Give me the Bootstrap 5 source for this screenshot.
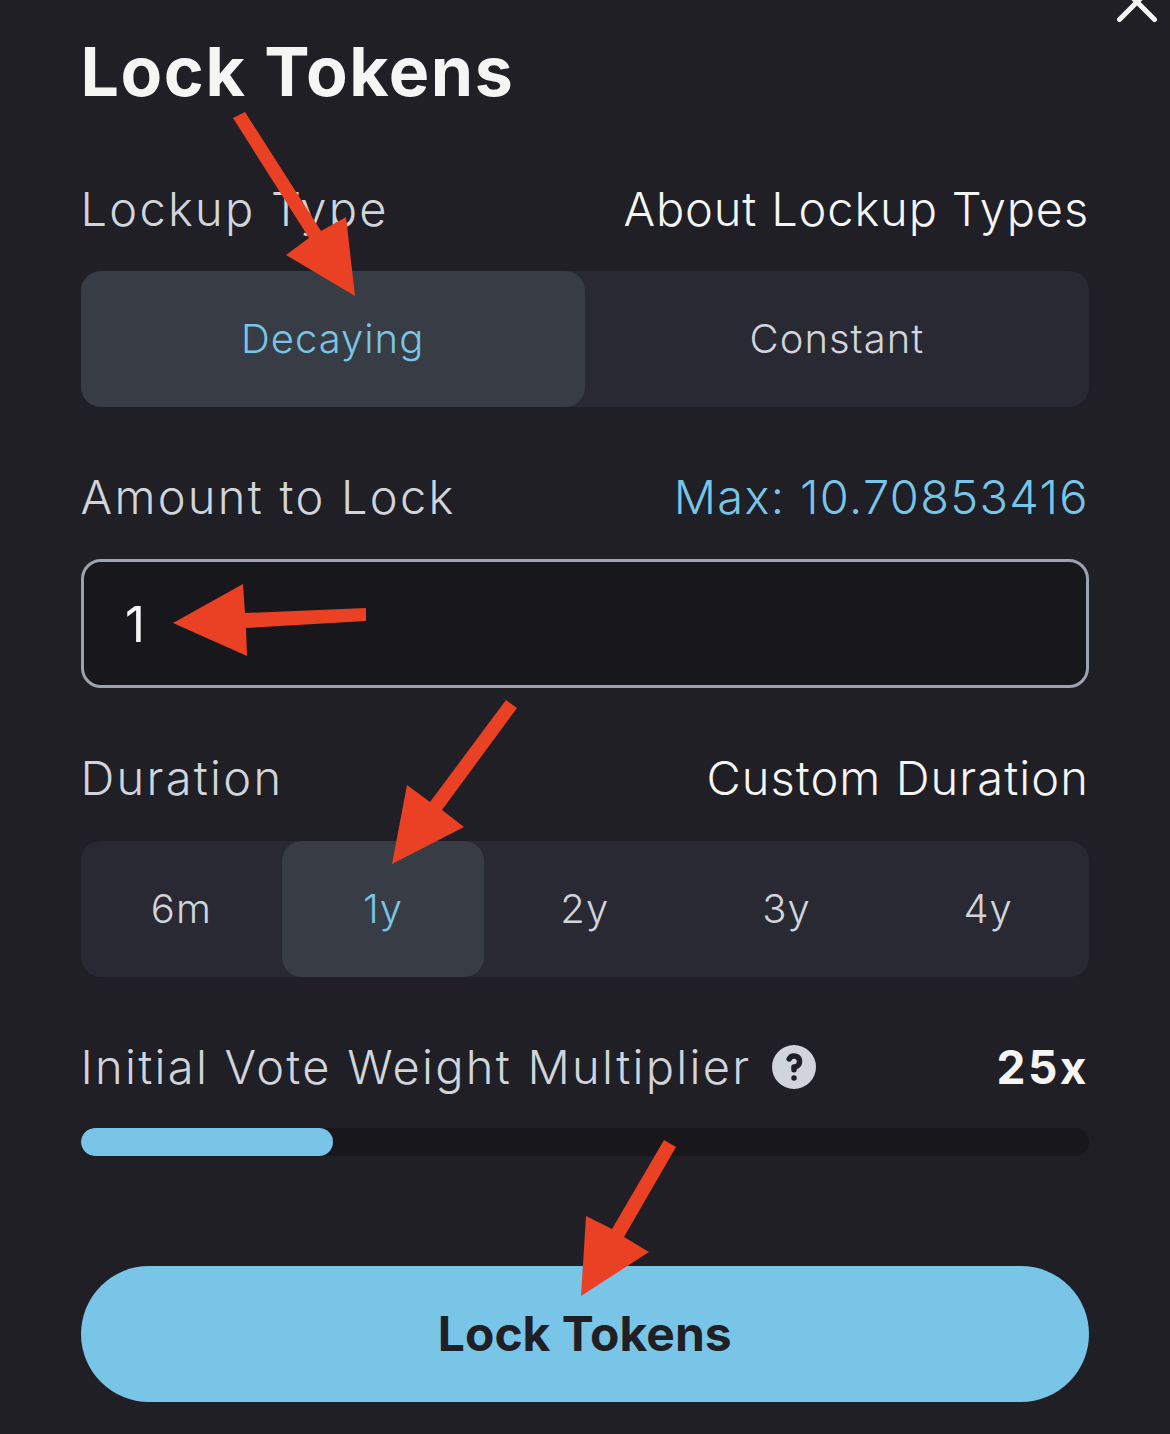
<!DOCTYPE html>
<html lang="en">
<head>
<meta charset="utf-8">
<title>Lock Tokens</title>
<link href="https://cdn.jsdelivr.net/npm/bootstrap@5.3.0/dist/css/bootstrap.min.css" rel="stylesheet">
<style>
html,body{height:100%}
body{background:#1f1f25;font-family:Inter,"Liberation Sans",sans-serif;overflow:hidden}
.lock-page{position:relative;height:1434px;padding:31px 81px 0 80.5px}
.lock-title{font-size:68px;line-height:80px;font-weight:700;color:#f5f5f4;margin:0 0 68px;letter-spacing:1.6px}
.lock-label{height:60px;font-size:47px;line-height:60px;font-weight:300;color:#d1d5db;letter-spacing:2.27px}
.lock-link{font-size:47px;line-height:60px;font-weight:350;color:#f5f5f4;letter-spacing:.85px}
.lock-link-wide{letter-spacing:1.07px}
.lock-max{color:#78c5e7;letter-spacing:1.35px}
.gap-32a{margin-bottom:32px}
.gap-31{margin-bottom:31px}
.gap-32{margin-bottom:32px}
.gap-33{margin-bottom:33px}
.sec-top{margin-top:60px}
.lock-tabs{background:#292933;border-radius:20px;height:136px}
.lock-tabs .btn{flex:1 1 0;border:0;border-radius:20px!important;margin:0!important;font-size:40px;font-weight:300;line-height:1.2;color:#d1d5db;padding:0;display:flex;align-items:center;justify-content:center;letter-spacing:1px}
.lock-tabs .btn.active{background:#383c44;color:#78c5e7}
.lock-input.form-control{height:129px;background:#18181c;border:3.500px solid #9ca3af;border-radius:20px;color:#f5f5f4;font-size:49px;font-weight:400;padding:2px 41.500px 0;box-shadow:none}
.help-ico{width:44px;height:44px;margin-left:21px;flex:none;display:block}
.lock-val{font-size:46px;line-height:60px;font-weight:700;color:#f5f5f4;letter-spacing:2.5px}
.lock-bar.progress{height:28px;background:#18181c;border-radius:14px}
.lock-bar .progress-bar{background:#78c5e7;border-radius:14px}
.lock-submit.btn{display:block;height:136px;margin-top:110px;background:#78c5e7;border:0;border-radius:68px;color:#1f1f25;font-size:48px;font-weight:700;padding:0}
.lock-close{position:absolute;top:0;right:0;width:60px;height:30px;display:block}
.lock-arrows{position:absolute;top:0;left:0;z-index:10;pointer-events:none}
</style>
</head>
<body>
<div class="lock-page">
  <svg class="lock-close" viewBox="1110 0 60 30" aria-label="Close"><path d="M1119.500 19.500L1137 2L1154.500 19.500M1137 2L1127-8M1137 2L1147-8" fill="none" stroke="#f5f5f4" stroke-width="5" stroke-linecap="round"/></svg>
  <h1 class="lock-title">Lock Tokens</h1>

  <div class="d-flex justify-content-between align-items-center gap-32a">
    <div class="lock-label">Lockup Type</div>
    <div class="lock-link">About Lockup Types</div>
  </div>
  <div class="btn-group lock-tabs w-100 d-flex" role="group">
    <button type="button" class="btn active">Decaying</button>
    <button type="button" class="btn">Constant</button>
  </div>

  <div class="d-flex justify-content-between align-items-center sec-top gap-32">
    <div class="lock-label">Amount to Lock</div>
    <div class="lock-link lock-max">Max: 10.70853416</div>
  </div>
  <input class="form-control lock-input" type="text" value="1" aria-label="Amount to Lock">

  <div class="d-flex justify-content-between align-items-center sec-top gap-33">
    <div class="lock-label">Duration</div>
    <div class="lock-link lock-link-wide">Custom Duration</div>
  </div>
  <div class="btn-group lock-tabs w-100 d-flex" role="group">
    <button type="button" class="btn">6m</button>
    <button type="button" class="btn active">1y</button>
    <button type="button" class="btn">2y</button>
    <button type="button" class="btn">3y</button>
    <button type="button" class="btn">4y</button>
  </div>

  <div class="d-flex justify-content-between align-items-center sec-top gap-31">
    <div class="d-flex align-items-center">
      <div class="lock-label">Initial Vote Weight Multiplier</div>
      <svg class="help-ico" viewBox="2 2 16 16"><path fill="#d1d5db" fill-rule="evenodd" clip-rule="evenodd" d="M18 10a8 8 0 11-16 0 8 8 0 0116 0zm-8-3a1 1 0 00-.867.5 1 1 0 11-1.731-1A3 3 0 0113 8a3.001 3.001 0 01-2 2.83V11a1 1 0 11-2 0v-1a1 1 0 011-1 1 1 0 100-2zm0 8a1 1 0 100-2 1 1 0 000 2z"/></svg>
    </div>
    <div class="lock-val">25x</div>
  </div>
  <div class="progress lock-bar"><div class="progress-bar" style="width:25%"></div></div>

  <button type="button" class="btn lock-submit w-100">Lock Tokens</button>

  <svg class="lock-arrows" width="1170" height="1434" viewBox="0 0 1170 1434" fill="#ea4023">
    <polygon points="245,112 321,231 346,217 355,296 286,255 309,238 233,118"/>
    <polygon points="173,623 243,584 245,613 366,608 366,621 246,628 247,656"/>
    <polygon points="506,700 517,708 442,810 464,827 392,864 407,785 430,802"/>
    <polygon points="664,1140 676,1147 624,1237 649,1252 581,1296 586,1216 612,1229"/>
  </svg>
</div>
<script src="https://cdn.jsdelivr.net/npm/bootstrap@5.3.0/dist/js/bootstrap.bundle.min.js"></script>
</body>
</html>
